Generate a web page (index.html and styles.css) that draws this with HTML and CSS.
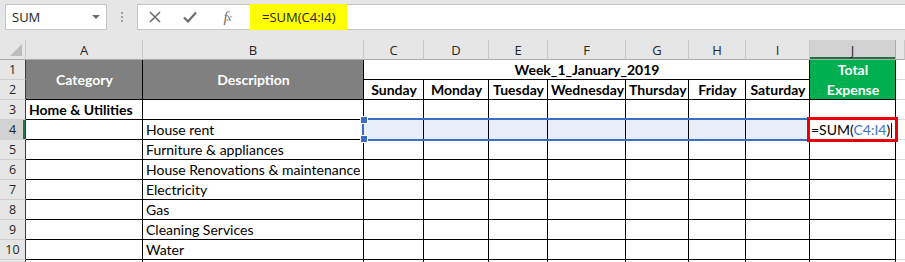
FILE: index.html
```html
<!DOCTYPE html>
<html lang="en">
<head>
    <meta charset="UTF-8">
    <title>Week expense sheet</title>
    <link rel="stylesheet" href="styles.css">
</head>
<body>
    <div class="toolbar">
        <div class="namebox">
            <span>SUM</span>
            <span class="dropdown"></span>
        </div>
        <div class="grip"><i></i><i></i><i></i></div>
        <div class="formula-bar">
            <div class="fx-buttons">
                <span class="btn btn-cancel">
                    <svg width="12" height="12" viewBox="0 0 12 12"><path d="M1 1 L11 11 M11 1 L1 11" stroke="#6d6d6d" stroke-width="1.6" fill="none"/></svg>
                </span>
                <span class="btn btn-enter">
                    <svg width="14" height="12" viewBox="0 0 14 12"><path d="M1 6.5 L5 10.5 L13 1.5" stroke="#6d6d6d" stroke-width="2.2" fill="none"/></svg>
                </span>
                <span class="btn btn-fx">f<sub>x</sub></span>
            </div>
            <div class="formula-input">
                <span class="highlight">=SUM(C4:I4)</span>
            </div>
        </div>
    </div>

    <div class="sheet">
        <!-- column headers -->
        <div class="corner"><span class="tri"></span></div>
        <div class="hd">A</div>
        <div class="hd">B</div>
        <div class="hd">C</div>
        <div class="hd">D</div>
        <div class="hd">E</div>
        <div class="hd">F</div>
        <div class="hd">G</div>
        <div class="hd">H</div>
        <div class="hd">I</div>
        <div class="hd active">J</div>
        <div class="hd"></div>

        <!-- row 1 -->
        <div class="rh">1</div>
        <div class="cell dark span-r2">Category</div>
        <div class="cell dark span-r2">Description</div>
        <div class="cell bold center span-week">Week_1_January_2019</div>
        <div class="cell green span-r2">Total<br>Expense</div>
        <div class="out"></div>

        <!-- row 2 -->
        <div class="rh">2</div>
        <div class="cell bold center">Sunday</div>
        <div class="cell bold center">Monday</div>
        <div class="cell bold center">Tuesday</div>
        <div class="cell bold center">Wednesday</div>
        <div class="cell bold center">Thursday</div>
        <div class="cell bold center">Friday</div>
        <div class="cell bold center">Saturday</div>
        <div class="out"></div>

        <!-- row 3 -->
        <div class="rh">3</div>
        <div class="cell bold">Home &amp; Utilities</div>
        <div class="cell"></div>
        <div class="cell"></div><div class="cell"></div><div class="cell"></div><div class="cell"></div>
        <div class="cell"></div><div class="cell"></div><div class="cell"></div>
        <div class="cell"></div>
        <div class="out"></div>

        <!-- row 4 -->
        <div class="rh active">4</div>
        <div class="cell"></div>
        <div class="cell">House rent</div>
        <div class="cell sel"></div><div class="cell sel"></div><div class="cell sel"></div><div class="cell sel"></div>
        <div class="cell sel"></div><div class="cell sel"></div><div class="cell sel"></div>
        <div class="cell editing">=SUM(<span class="ref">C4:I4</span>)<span class="text-caret"></span></div>
        <div class="out"></div>

        <!-- row 5 -->
        <div class="rh">5</div>
        <div class="cell"></div>
        <div class="cell">Furniture &amp; appliances</div>
        <div class="cell"></div><div class="cell"></div><div class="cell"></div><div class="cell"></div>
        <div class="cell"></div><div class="cell"></div><div class="cell"></div>
        <div class="cell"></div>
        <div class="out"></div>

        <!-- row 6 -->
        <div class="rh">6</div>
        <div class="cell"></div>
        <div class="cell">House Renovations &amp; maintenance</div>
        <div class="cell"></div><div class="cell"></div><div class="cell"></div><div class="cell"></div>
        <div class="cell"></div><div class="cell"></div><div class="cell"></div>
        <div class="cell"></div>
        <div class="out"></div>

        <!-- row 7 -->
        <div class="rh">7</div>
        <div class="cell"></div>
        <div class="cell">Electricity</div>
        <div class="cell"></div><div class="cell"></div><div class="cell"></div><div class="cell"></div>
        <div class="cell"></div><div class="cell"></div><div class="cell"></div>
        <div class="cell"></div>
        <div class="out"></div>

        <!-- row 8 -->
        <div class="rh">8</div>
        <div class="cell"></div>
        <div class="cell">Gas</div>
        <div class="cell"></div><div class="cell"></div><div class="cell"></div><div class="cell"></div>
        <div class="cell"></div><div class="cell"></div><div class="cell"></div>
        <div class="cell"></div>
        <div class="out"></div>

        <!-- row 9 -->
        <div class="rh">9</div>
        <div class="cell"></div>
        <div class="cell">Cleaning Services</div>
        <div class="cell"></div><div class="cell"></div><div class="cell"></div><div class="cell"></div>
        <div class="cell"></div><div class="cell"></div><div class="cell"></div>
        <div class="cell"></div>
        <div class="out"></div>

        <!-- row 10 -->
        <div class="rh">10</div>
        <div class="cell"></div>
        <div class="cell">Water</div>
        <div class="cell"></div><div class="cell"></div><div class="cell"></div><div class="cell"></div>
        <div class="cell"></div><div class="cell"></div><div class="cell"></div>
        <div class="cell"></div>
        <div class="out"></div>

        <!-- next row, only its top edge shows -->
        <div class="rh"></div>
        <div class="cell"></div>
        <div class="cell"></div>
        <div class="cell"></div><div class="cell"></div><div class="cell"></div><div class="cell"></div>
        <div class="cell"></div><div class="cell"></div><div class="cell"></div>
        <div class="cell"></div>
        <div class="out"></div>

        <!-- range reference C4:I4 and the annotated formula cell -->
        <div class="range-box">
            <span class="handle handle-top"></span>
            <span class="handle handle-bottom"></span>
        </div>
        <div class="mark-box"></div>
    </div>
</body>
</html>
```

FILE: styles.css
```css
body {
    margin: 0;
    background-color: #ffffff;
    font-family: Lato, "Liberation Sans", sans-serif;
    overflow: hidden;
}

/* formula bar strip */
.toolbar {
    height: 40px;
    box-sizing: border-box;
    padding: 4px 0 0 5px;
    background-color: #e6e6e6;
    display: flex;
    align-items: flex-start;
}

.namebox {
    width: 102px;
    height: 26px;
    box-sizing: border-box;
    padding: 0 6px;
    border: 1px solid #c6c6c6;
    background-color: #ffffff;
    display: flex;
    align-items: center;
    justify-content: space-between;
    font-family: "Open Sans", sans-serif;
    font-size: 13px;
    color: #222222;
}

.dropdown {
    border-left: 4px solid transparent;
    border-right: 4px solid transparent;
    border-top: 4px solid #707070;
}

.grip {
    width: 30px;
    padding-top: 8px;
    display: flex;
    flex-direction: column;
    align-items: center;
    gap: 2px;
}

.grip i {
    width: 2px;
    height: 2px;
    background-color: #a0a0a0;
}

.formula-bar {
    flex: 1;
    height: 26px;
    box-sizing: border-box;
    border: 1px solid #c6c6c6;
    border-right: none;
    background-color: #ffffff;
    display: flex;
}

.fx-buttons {
    display: flex;
    align-items: center;
}

.btn {
    display: flex;
    justify-content: center;
    align-items: center;
    height: 100%;
}

.btn-cancel { width: 34px; }
.btn-enter { width: 36px; }

.btn-fx {
    width: 39px;
    font-family: "Liberation Serif", serif;
    font-style: italic;
    font-size: 15px;
    color: #6d6d6d;
}

.btn-fx sub {
    font-size: 11px;
    vertical-align: -1px;
    margin-left: -1px;
}

.formula-input {
    flex: 1;
    display: flex;
}

.highlight {
    margin: -1px 0 -1px 3px;
    width: 97px;
    box-sizing: border-box;
    padding-left: 12px;
    background-color: #ffff00;
    display: flex;
    align-items: center;
    font-family: "Open Sans", sans-serif;
    font-size: 13px;
    color: #222222;
}

/* worksheet grid */
.sheet {
    position: relative;
    display: grid;
    grid-template-columns: 26px 117px 221px 60px 65px 59px 78px 63px 57px 64px 86px 1fr;
    grid-template-rows: repeat(12, 20px);
}

.corner,
.hd,
.rh {
    box-sizing: border-box;
    background-color: #e6e6e6;
    font-family: "Open Sans", sans-serif;
    font-size: 13px;
    color: #262626;
    display: flex;
    align-items: center;
    justify-content: center;
}

.corner {
    border-right: 1px solid #c8c8c8;
    border-bottom: 1px solid #ababab;
    align-items: flex-end;
    justify-content: flex-end;
    padding: 0 3px 3px 0;
}

.tri {
    border-left: 12px solid transparent;
    border-bottom: 12px solid #bcbcbc;
}

.hd {
    border-right: 1px solid #c8c8c8;
    border-bottom: 1px solid #ababab;
}

.hd.active {
    background-color: #d2d2d2;
    box-shadow: inset 0 -2px 0 #217346;
    border-right-color: #ababab;
}

.rh {
    border-right: 1px solid #3c3c3c;
    border-bottom: 1px solid #cfcfcf;
    font-size: 12.5px;
}

.rh.active {
    background-color: #d2d2d2;
    box-shadow: inset -2px 0 0 #217346;
}

.cell {
    box-sizing: border-box;
    border-right: 1px solid #000000;
    border-bottom: 1px solid #000000;
    padding: 0 2px 0 3px;
    font-size: 14px;
    line-height: 19px;
    color: #000000;
    white-space: nowrap;
    overflow: hidden;
}

.bold {
    font-weight: bold;
}

.center {
    text-align: center;
}

.span-r2 {
    grid-row: span 2;
}

.span-week {
    grid-column: span 7;
}

.dark,
.green {
    font-weight: bold;
    color: #ffffff;
    text-align: center;
}

.dark {
    background-color: #808080;
    display: flex;
    align-items: center;
    justify-content: center;
}

.green {
    background-color: #00b050;
    line-height: 20px;
}

.sel {
    background-color: #e8eef8;
}

.editing {
    padding-left: 1px;
    overflow: visible;
}

.ref {
    color: #3a74c6;
}

.text-caret {
    display: inline-block;
    width: 1px;
    height: 15px;
    margin-left: 1px;
    vertical-align: -3px;
    background-color: #000000;
}

.out {
    box-sizing: border-box;
    border-bottom: 1px solid #dadada;
}

/* reference highlight over C4:I4 */
.range-box {
    position: absolute;
    left: 362px;
    top: 78px;
    width: 447px;
    height: 23px;
    box-sizing: border-box;
    border: 2px solid #3b6fc6;
}

.handle {
    position: absolute;
    left: -4px;
    width: 6px;
    height: 6px;
    background-color: #3b6fc6;
    border: 1px solid #ffffff;
}

.handle-top { top: -4px; }
.handle-bottom { bottom: -4px; }

/* red annotation box on J4 */
.mark-box {
    position: absolute;
    left: 807px;
    top: 77px;
    width: 91px;
    height: 25px;
    box-sizing: border-box;
    border: 3px solid #e8000b;
}
```
